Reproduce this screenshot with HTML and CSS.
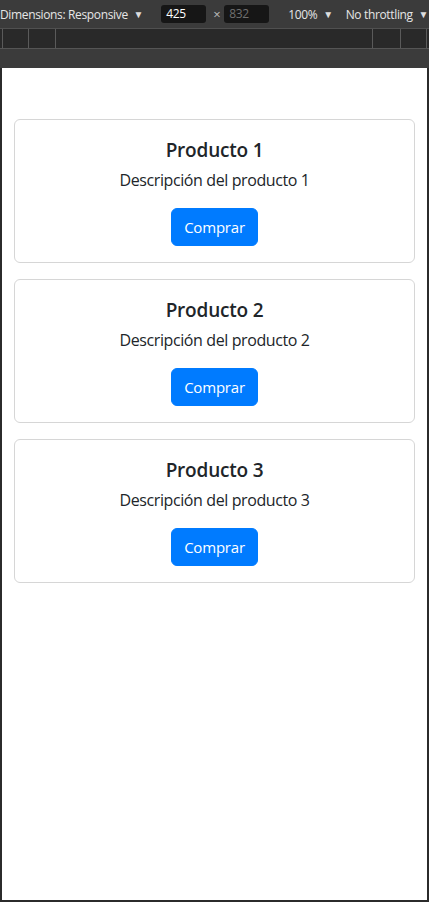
FILE: index.html
```html
<!DOCTYPE html>
<html lang="es">
<head>
<meta charset="utf-8">
<title>Productos</title>
<link rel="stylesheet" href="styles.css">
</head>
<body>
<div class="devtools">
  <div class="toolbar">
    <span class="dd">Dimensions: Responsive <span class="caret">▼</span></span>
    <span class="inputs">
      <span class="num active">425</span>
      <span class="times">×</span>
      <span class="num dim">832</span>
    </span>
    <span class="dd zoom">100% <span class="caret">▼</span></span>
    <span class="dd throttle">No throttling <span class="caret">▼</span></span>
  </div>
  <div class="ruler">
    <div class="ticks left"><i></i><i></i><i></i></div>
    <div class="ticks right"><i></i><i></i><i></i></div>
  </div>
  <div class="spacer"></div>
  <div class="frame">
    <main class="viewport">
      <div class="container">
        <div class="card">
          <h5>Producto 1</h5>
          <p>Descripción del producto 1</p>
          <button class="btn">Comprar</button>
        </div>
        <div class="card">
          <h5>Producto 2</h5>
          <p>Descripción del producto 2</p>
          <button class="btn">Comprar</button>
        </div>
        <div class="card">
          <h5>Producto 3</h5>
          <p>Descripción del producto 3</p>
          <button class="btn">Comprar</button>
        </div>
      </div>
    </main>
  </div>
</div>
</body>
</html>
```

FILE: styles.css
```css
* { box-sizing: border-box; }
html, body { margin: 0; padding: 0; }
body {
  background: #2b2b2b;
  font-family: "Open Sans", "Noto Sans", sans-serif;
  width: 429px;
  height: 902px;
  overflow: hidden;
}
.devtools { display: flex; flex-direction: column; }
.toolbar {
  height: 29px;
  background: #3b3b3b;
  border-bottom: 1px solid #505050;
  display: flex;
  align-items: center;
  color: #e6e6e6;
  font-size: 12px;
  letter-spacing: -0.35px;
  white-space: nowrap;
  padding-left: 0;
}
.caret { font-size: 10px; margin-left: 3px; position: relative; top: -1px; color: #dddddd; }
.inputs { display: flex; align-items: center; margin-left: 18px; }
.num {
  display: inline-block;
  width: 45px;
  height: 18px;
  line-height: 18px;
  background: #161616;
  border-radius: 3px;
  padding-left: 5px;
  font-size: 12px;
}
.num.active { color: #ffffff; }
.num.dim { color: #6f6f6f; }
.times { margin: 0 4px 0 7px; color: #bbbbbb; font-size: 13px; }
.zoom { margin-left: 19px; }
.throttle { margin-left: 13px; }
.ruler {
  height: 20px;
  background: #292929;
  border-bottom: 1px solid #555555;
  display: flex;
  justify-content: space-between;
}
.ticks { display: flex; height: 100%; }
.ticks i { display: block; width: 1px; height: 100%; background: #5a5a5a; }
.ticks.left { padding-left: 2px; }
.ticks.left i:nth-child(2) { margin-left: 25px; }
.ticks.left i:nth-child(3) { margin-left: 26px; }
.ticks.right { padding-right: 2px; }
.ticks.right i:nth-child(2) { margin-left: 27px; }
.ticks.right i:nth-child(3) { margin-left: 25px; }
.spacer { height: 19px; background: #3b3b3b; }
.frame { padding: 0 2px 2px 2px; background: #2b2b2b; }
.viewport {
  width: 425px;
  height: 832px;
  background: #ffffff;
  color: #212529;
  font-family: "Open Sans", "Noto Sans", sans-serif;
}
.container { padding: 51px 12px 0 12px; }
.card {
  border: 1px solid #d6d6d6;
  border-radius: 6px;
  padding: 16px;
  margin-bottom: 16px;
  text-align: center;
  width: 401px;
}
.card h5 {
  margin: 0 0 6px 0;
  padding-top: 2px;
  font-size: 19px;
  line-height: 24px;
  font-weight: 600;
  letter-spacing: -0.2px;
}
.card p {
  margin: 0 0 16px 0;
  font-size: 16px;
  line-height: 24px;
  letter-spacing: -0.4px;
}
.btn {
  font-family: inherit;
  font-size: 15px;
  line-height: 24px;
  height: 38px;
  padding: 6px 12px;
  border: 1px solid #007bff;
  background: #007bff;
  color: #ffffff;
  border-radius: 6px;
  letter-spacing: -0.2px;
  width: 87px;
}
```
